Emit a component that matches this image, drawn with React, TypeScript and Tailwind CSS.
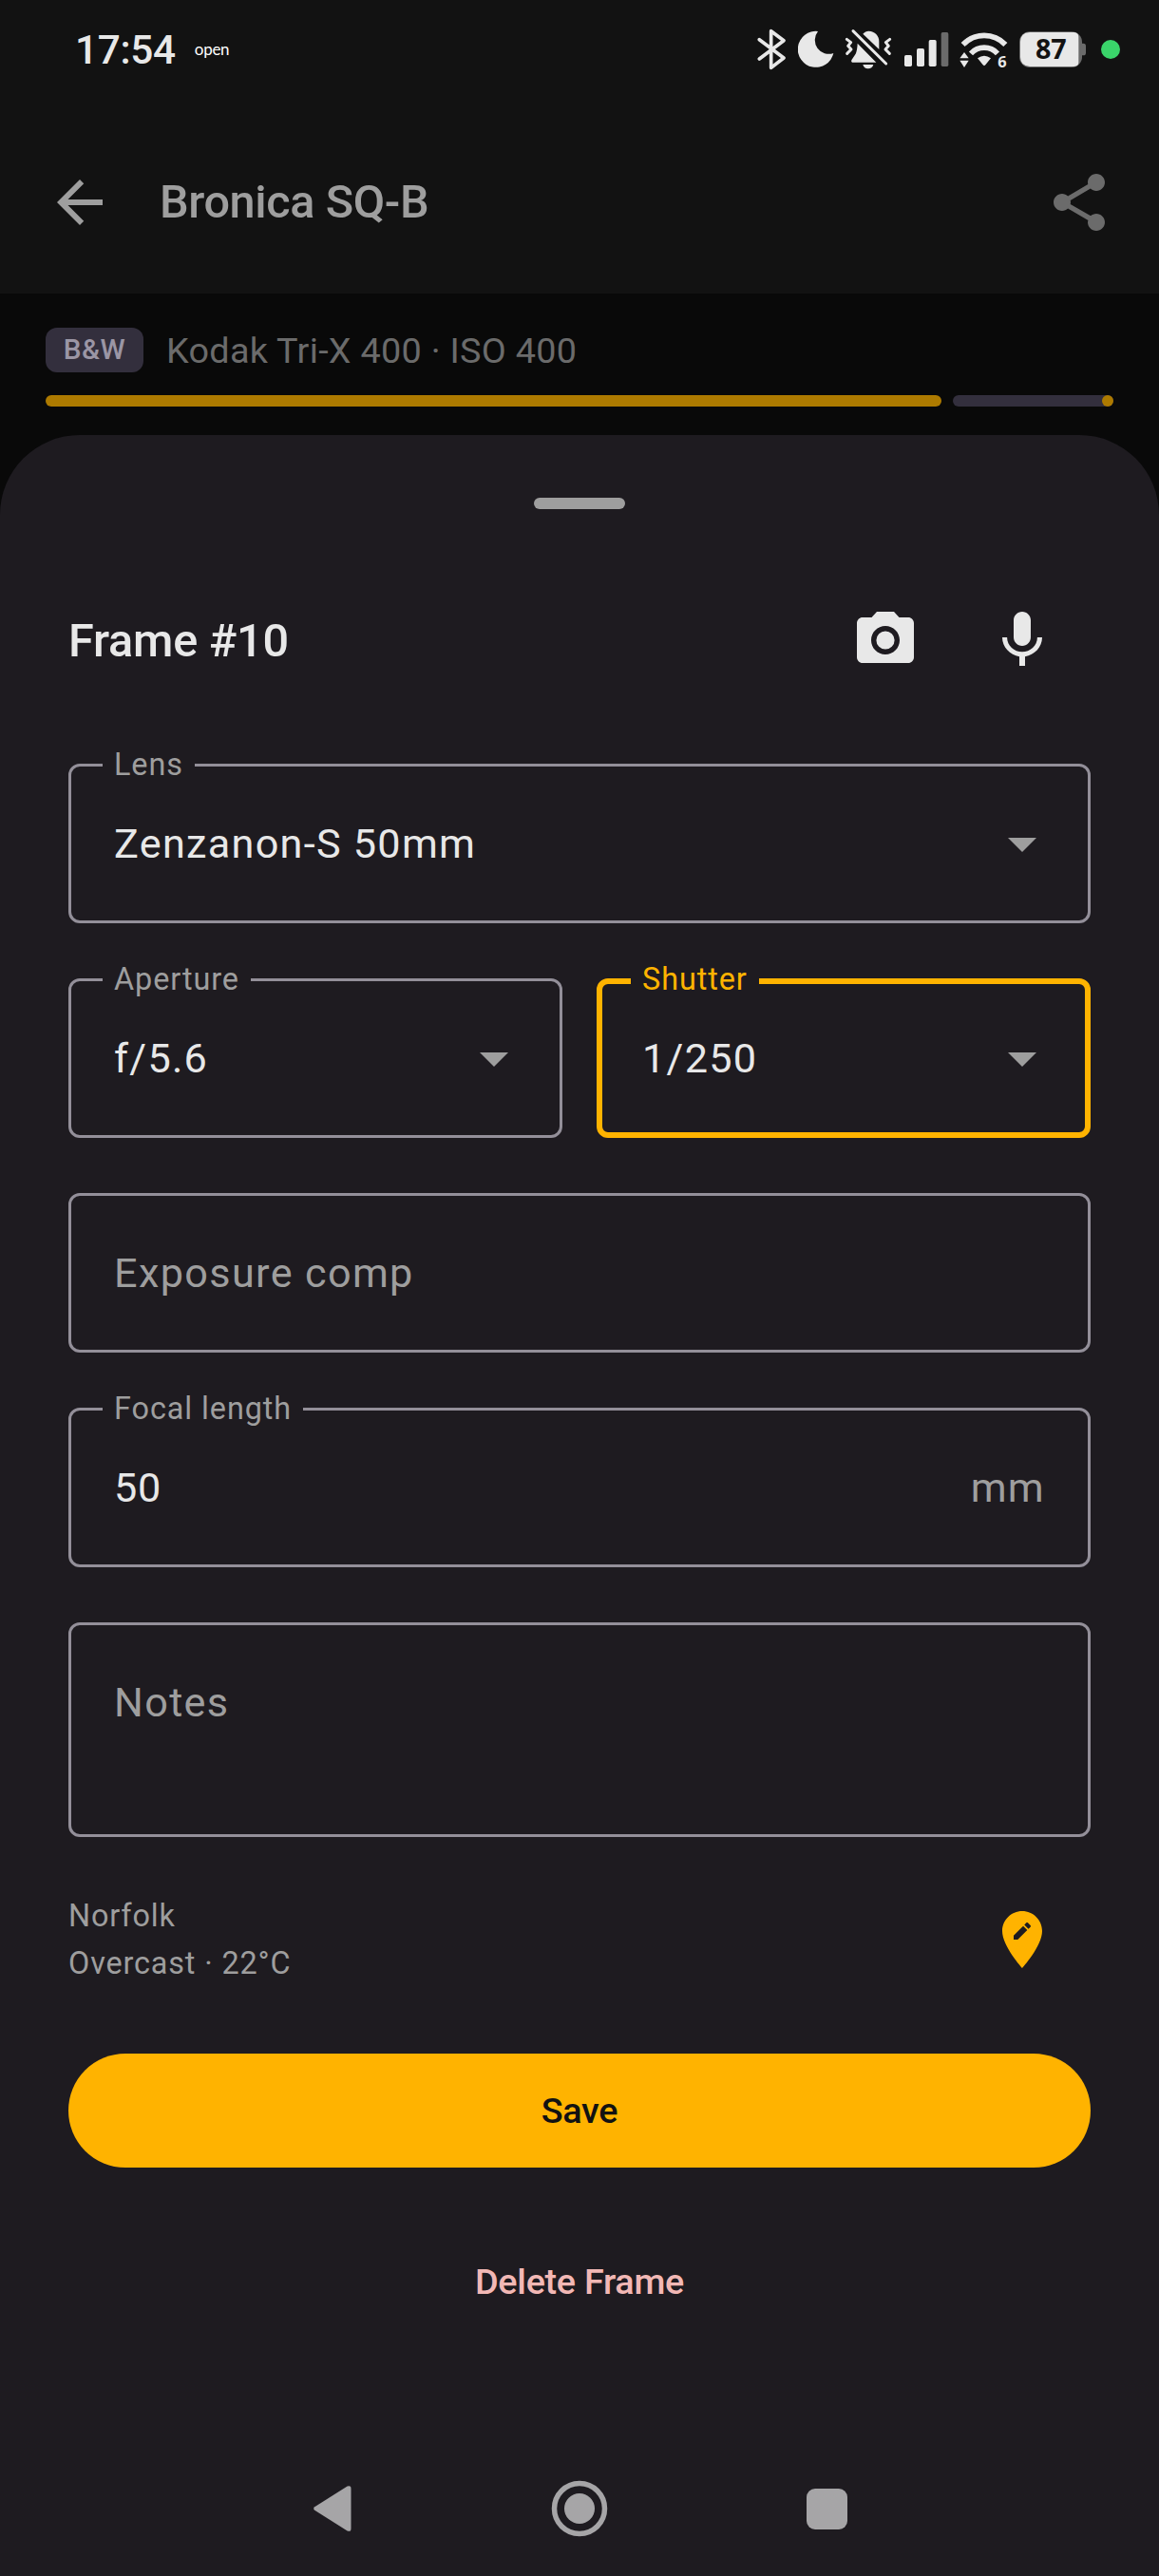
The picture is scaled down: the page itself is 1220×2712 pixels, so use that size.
import type { ReactNode } from 'react';

const LIGHT = '#e8e8e8';
const DIM = '#6b6b6b';

function StatusIcons() {
  return (
    <div className="flex items-center">
      <svg className="h-[44px] w-[30px]" viewBox="53 90 90 132" fill="none" stroke={LIGHT} strokeWidth="11" strokeLinecap="round" strokeLinejoin="round">
        <path d="M60 125 137 183 97 214V98L137 128 60 186" />
      </svg>
      <svg className="ml-[13px] h-[40px] w-[38px]" viewBox="182 96 114 120" fill={LIGHT}>
        <path d="M245 99A57 57 0 1 0 294 168A44 44 0 0 1 245 99Z" />
      </svg>
      <svg className="ml-[11px] h-[44px] w-[50px]" viewBox="329 87 150 132" fill={LIGHT}>
        <path d="M387 104C392 98 399 95 405 95C425 95 438 110 438 128V153Z" />
        <path d="M370 134 429 194H353Q349 192 351 187L364 167Q369 156 370 134Z" />
        <path d="M387 201H420Q416 214 403 214Q391 214 387 201Z" />
        <g fill="none" stroke={LIGHT} strokeWidth="9" strokeLinecap="round" strokeLinejoin="round">
          <path d="M356 95 460 198" />
          <path d="M336 121 349 131 340 142 350 153 337 166M472 121 459 131 468 142 458 153 471 166" />
        </g>
      </svg>
      <svg className="ml-[13px] h-[40px] w-[47px]" viewBox="516 96 141 120" fill={LIGHT}>
        <rect x="516" y="174" width="24" height="36" rx="5" />
        <rect x="555" y="153" width="24" height="57" rx="5" />
        <rect x="593" y="126" width="24" height="84" rx="5" />
        <rect x="632" y="102" width="23" height="108" rx="5" fill={DIM} />
      </svg>
      <svg className="ml-[11px] h-[40px] w-[50px] overflow-visible" viewBox="690 96 150 120" fill={LIGHT}>
        <g fill="none" stroke={LIGHT} strokeWidth="17">
          <path d="M701 141A92 92 0 0 1 835 141" />
          <path d="M726 169A57 57 0 0 1 810 169" />
        </g>
        <path d="M747 184Q768 169 789 184L772 205Q768 210 764 205Z" />
        <path d="M691 184 705 165 719 184ZM691 191H719L705 213Z" />
        <text x="811" y="213" fontSize="49" fontWeight="700" fontFamily="Open Sans">6</text>
      </svg>
      <svg className="ml-[13px] h-[40px] w-[70px]" viewBox="879 96 210 120" fill={DIM}>
        <rect x="879" y="100" width="198" height="113" rx="33" />
        <rect x="1070" y="137" width="19" height="38" rx="8" />
        <path fill={LIGHT} d="M912 102H1052Q1066 104 1066 116V198Q1066 208 1052 210H912Q882 208 882 180V132Q882 104 912 102Z" />
        <text x="979" y="186" fill="#121212" textAnchor="middle" fontSize="86" fontWeight="700" fontFamily="Open Sans">87</text>
      </svg>
      <span className="ml-[16px] size-[20px] rounded-full bg-[#3ad46a]" />
    </div>
  );
}

function MaterialIcon({ d, className = '' }: { d: string; className?: string }) {
  return (
    <svg viewBox="0 0 24 24" fill="currentColor" className={`size-[72px] shrink-0 ${className}`}>
      <path d={d} />
    </svg>
  );
}

const ICONS = {
  back: 'M20 11H7.83l5.59-5.59L12 4l-8 8 8 8 1.41-1.41L7.83 13H20v-2z',
  share:
    'M18 16c-.76 0-1.44.3-1.96.77L8.91 12.7c.05-.23.09-.46.09-.7s-.04-.47-.09-.7l7.05-4.11c.54.5 1.25.81 2.04.81 1.66 0 3-1.34 3-3s-1.34-3-3-3-3 1.34-3 3c0 .24.04.47.09.7L8.04 9.81C7.5 9.31 6.79 9 6 9c-1.66 0-3 1.34-3 3s1.34 3 3 3c.79 0 1.5-.31 2.04-.81l7.12 4.16c-.1.21-.16.43-.16.65 0 1.66 1.34 3 3 3s3-1.34 3-3-1.34-3-3-3z',
  camera:
    'M12 8.8a3.2 3.2 0 1 0 0 6.4 3.2 3.2 0 1 0 0-6.4zM9 2L7.17 4H4c-1.1 0-2 .9-2 2v12c0 1.1.9 2 2 2h16c1.1 0 2-.9 2-2V6c0-1.1-.9-2-2-2h-3.17L15 2H9zm3 15c-2.76 0-5-2.24-5-5s2.24-5 5-5 5 2.24 5 5-2.24 5-5 5z',
  mic: 'M12 14c1.66 0 2.99-1.34 2.99-3L15 5c0-1.66-1.34-3-3-3S9 3.34 9 5v6c0 1.66 1.34 3 3 3zm5.3-3c0 3-2.54 5.1-5.3 5.1S6.7 14 6.7 11H5c0 3.41 2.72 6.23 6 6.72V21h2v-3.28c3.28-.48 6-3.3 6-6.72h-1.7z',
  dropDown: 'M7 10l5 5 5-5z',
  editLocation:
    'M12 2C8.14 2 5 5.14 5 9c0 5.25 7 13 7 13s7-7.75 7-13c0-3.86-3.14-7-7-7zm-1.56 10H9v-1.44l3.35-3.34 1.43 1.43L10.44 12zm4.45-4.45l-.7.7-1.44-1.44.7-.7c.15-.15.39-.15.54 0l.9.9c.15.15.15.39 0 .54z',
};

type FieldProps = {
  label?: string;
  focused?: boolean;
  className?: string;
  children: ReactNode;
};

function Field({ label, focused = false, className = 'h-[168px] items-center', children }: FieldProps) {
  const frame = focused ? 'border-[6px] border-[#ffb300] px-[42px]' : 'border-[3px] border-[#938f99] px-[45px]';
  const tag = focused ? 'left-[30px] -top-[27px] text-[#ffb300]' : 'left-[33px] -top-[24px] text-[#9e9e9e]';
  return (
    <div className={`relative flex w-full min-w-0 justify-between rounded-[12px] text-[43.2px] tracking-[1.28px] text-[#e8e8e8] ${frame} ${className}`}>
      {label && (
        <span className={`absolute bg-[#1e1b20] px-3 text-[32.4px] leading-[44px] tracking-[0.92px] ${tag}`}>{label}</span>
      )}
      {children}
    </div>
  );
}

function Select({ label, value, focused }: { label: string; value: string; focused?: boolean }) {
  return (
    <Field label={label} focused={focused}>
      <span className="pt-[2px]">{value}</span>
      <MaterialIcon d={ICONS.dropDown} className="-mr-[12px] text-[#9e9e9e]" />
    </Field>
  );
}

export default function App() {
  return (
    <div className="flex h-[2712px] w-[1220px] flex-col overflow-hidden bg-[#090909] font-['Roboto',sans-serif]">
      <div className="h-[309px] bg-[#121212]">
        <div className="flex h-[104px] items-center justify-between pl-[79px] pr-[41px]">
          <div className="flex items-center text-[#e8e8e8]">
            <span className="pt-[3px] text-[42.3px] leading-none font-medium tracking-[-0.3px]">17:54</span>
            <span className="ml-[20px] font-['Lato',sans-serif] text-[17px] leading-none font-normal tracking-[-0.3px] text-white">open</span>
          </div>
          <StatusIcons />
        </div>
        <div className="flex h-[218px] items-center pr-[48px] pl-[48px] text-[#9e9e9e]">
          <MaterialIcon d={ICONS.back} />
          <h1 className="ml-[48px] flex-1 text-[48.6px] leading-[72px] font-medium tracking-[-0.4px]">Bronica SQ-B</h1>
          <MaterialIcon d={ICONS.share} className="text-[#6b6b6b]" />
        </div>
      </div>

      <div className="flex h-[149px] flex-col px-[48px] pt-[36px]">
        <div className="flex h-[47px] items-center">
          <span className="flex h-[47px] w-[103px] items-center justify-center rounded-[12px] bg-[#332f3d] text-[29.7px] font-medium tracking-[0.6px] text-[#9b96a5]">
            B&amp;W
          </span>
          <span className="ml-[24px] pt-[2px] text-[37.8px] tracking-[0.28px] text-[#6b6b6b]">Kodak Tri-X 400 · ISO 400</span>
        </div>
        <div className="mt-[24px] flex h-[12px] gap-[12px]">
          <div className="w-[943px] rounded-full bg-[#ad7a00]" />
          <div className="flex flex-1 justify-end rounded-full bg-[#332f3d]">
            <span className="size-[12px] rounded-full bg-[#ad7a00]" />
          </div>
        </div>
      </div>

      <div className="flex flex-1 flex-col rounded-t-[84px] bg-[#1e1b20] px-[72px]">
        <div className="mt-[66px] h-[12px] w-[96px] self-center rounded-full bg-[#9e9e9e]" />

        <div className="mt-[66px] flex h-[144px] items-center text-[#e8e8e8]">
          <h2 className="flex-1 pt-[2px] text-[48.6px] leading-[72px] font-medium tracking-[-0.2px]">Frame #10</h2>
          <div className="flex gap-[72px] pr-[36px]">
            <MaterialIcon d={ICONS.camera} />
            <MaterialIcon d={ICONS.mic} />
          </div>
        </div>

        <div className="mt-[58px] flex flex-col gap-[58px]">
          <Select label="Lens" value="Zenzanon-S 50mm" />
          <div className="flex gap-[36px]">
            <Select label="Aperture" value="f/5.6" />
            <Select label="Shutter" value="1/250" focused />
          </div>
          <Field>
            <span className="pt-[2px] tracking-[1.35px] text-[#9e9e9e]">Exposure comp</span>
          </Field>
          <Field label="Focal length">
            <span className="pt-[2px] tracking-[0.8px]">50</span>
            <span className="pt-[2px] text-[#9e9e9e]">mm</span>
          </Field>
          <Field className="h-[226px] items-start pt-[49px]">
            <span className="leading-[65px] tracking-[1.35px] text-[#9e9e9e]">Notes</span>
          </Field>
        </div>

        <div className="mt-[36px] flex h-[144px] items-center justify-between pr-[36px]">
          <div className="text-[32.4px] leading-[50px] tracking-[0.85px] text-[#9e9e9e]">
            <p>Norfolk</p>
            <p>Overcast · 22°C</p>
          </div>
          <MaterialIcon d={ICONS.editLocation} className="text-[#ffb300]" />
        </div>

        <button className="mt-[48px] h-[120px] rounded-full bg-[#ffb300] text-[37.8px] font-medium tracking-[-0.35px] text-[#121212]">Save</button>
        <button className="mt-[60px] h-[120px] text-[37.8px] font-medium tracking-[-0.3px] text-[#f2b8b5]">Delete Frame</button>

        <div className="mt-[110px] flex h-[138px] items-center justify-between pr-[256px] pl-[257px] text-[#a6a5a7]">
          <svg className="h-[50px] w-[42px]" viewBox="0 0 42 50" fill="currentColor">
            <path d="M2.2 23.2 36.6 1.6Q40.5 0 40.5 4V46Q40.5 50 36.6 48.4L2.2 26.8Q.2 25 2.2 23.2Z" />
          </svg>
          <svg className="size-[60px]" viewBox="0 0 60 60" fill="currentColor">
            <circle cx="30" cy="30" r="26.5" fill="none" stroke="currentColor" strokeWidth="5.5" />
            <circle cx="30" cy="30" r="16" />
          </svg>
          <span className="size-[43px] rounded-[9px] bg-[#a6a5a7]" />
        </div>
      </div>
    </div>
  );
}
